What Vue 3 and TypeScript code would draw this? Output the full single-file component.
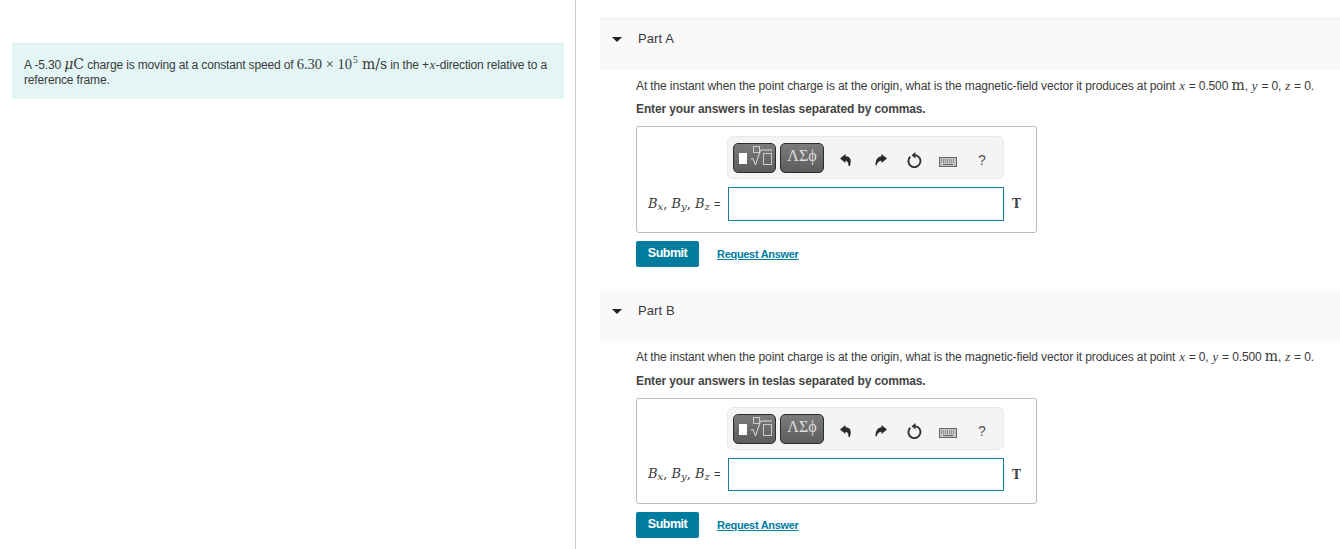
<script setup lang="ts">
interface Part {
  title: string
  point: 'x' | 'y'
}

const parts: Part[] = [
  { title: 'Part A', point: 'x' },
  { title: 'Part B', point: 'y' }
]
</script>

<template>
  <div class="page">
    <aside class="left">
      <div class="intro">
        A -5.30 <span class="u"><i>μ</i>C</span> charge is moving at a constant speed of
        <span class="n">6.30 × 10<sup>5</sup></span> <span class="u">m/s</span> in the +<i class="v">x</i>-direction relative to a
        reference frame.
      </div>
    </aside>

    <main class="right">
      <section v-for="part in parts" :key="part.title" class="part">
        <header class="part-head">
          <span class="caret"></span>
          <span class="part-title">{{ part.title }}</span>
        </header>

        <div class="part-body">
          <p class="question">
            At the instant when the point charge is at the origin, what is the magnetic-field vector it produces at point
            <template v-if="part.point === 'x'">
              <i class="v">x</i> = 0.500 <span class="u">m</span>, <i class="v">y</i> = 0, <i class="v">z</i> = 0.
            </template>
            <template v-else>
              <i class="v">x</i> = 0, <i class="v">y</i> = 0.500 <span class="u">m</span>, <i class="v">z</i> = 0.
            </template>
          </p>
          <p class="hint">Enter your answers in teslas separated by commas.</p>

          <div class="answer">
            <div class="toolbar">
              <button class="tpl" type="button">
                <svg width="41" height="28" viewBox="0 0 41 28">
                  <rect x="5" y="9" width="8" height="11" fill="#fff" />
                  <rect x="19.500" y="2.500" width="6" height="6" fill="none" stroke="#ccc" />
                  <path d="M17 15l2-.5 2.500 6.500 5-15H38" fill="none" stroke="#ddd" />
                  <rect x="29.500" y="9.500" width="8" height="11" fill="none" stroke="#ccc" />
                </svg>
              </button>
              <button class="tpl sym" type="button">ΛΣϕ</button>
              <div class="tools">
                <svg class="ico undo" viewBox="0 0 12 12" width="12" height="12">
                  <path d="M5.500 0L0 4.500 5.500 9V6.800c2 0 3 2 3 5.200h1.300c2.200-5.500.7-9.700-4.300-9.700z" fill="#2a2a2a" />
                </svg>
                <svg class="ico redo" viewBox="0 0 12 12" width="12" height="12">
                  <path d="M6.500 0L12 4.500 6.500 9V6.800c-2.500 0-4 1.500-5 4.700H.5C.3 6 3 2.300 6.500 2.300z" fill="#2a2a2a" />
                </svg>
                <svg class="ico reset" viewBox="0 0 16 16" width="16" height="16">
                  <path d="M4.300 4.700a6 6 0 1 0 4.700-1.600" fill="none" stroke="#333" stroke-width="1.900" />
                  <path d="M9.500 0v6.500L5.500 3.200z" fill="#333" />
                </svg>
                <svg class="kbd" viewBox="0 0 18 10" width="18" height="10">
                  <rect x=".5" y=".5" width="17" height="9" fill="#c4c4c4" stroke="#666" />
                  <path d="M2 3h14M2 5h14" stroke="#666" stroke-dasharray="1 1" />
                  <path d="M4 7.500h10" stroke="#666" />
                </svg>
                <span class="help">?</span>
              </div>
            </div>

            <div class="row">
              <label class="lbl">
                <i>B<sub>x</sub></i>, <i>B<sub>y</sub></i>, <i>B<sub>z</sub></i> <span class="eq">=</span>
              </label>
              <input class="field" type="text" />
              <span class="unit">T</span>
            </div>
          </div>

          <div class="actions">
            <button class="submit" type="button">Submit</button>
            <a class="req" href="#">Request Answer</a>
          </div>
        </div>
      </section>
    </main>
  </div>
</template>

<style>
html, body { margin: 0; background: #fff; }
</style>

<style scoped>
.page { display: flex; width: 1340px; height: 549px; overflow: hidden; font-family: "Liberation Sans", Arial, sans-serif; color: #3a3a3a; font-size: 12px; letter-spacing: -0.12px; }
.left { flex: none; width: 552px; border-right: 1px solid #c6d0dc; padding: 43px 11px 0 12px; }
.intro { background: #e4f5f6; border-top: 1px solid #e0ecee; height: 56px; box-sizing: border-box; padding: 14px 12px 0; line-height: 15px; letter-spacing: -0.15px; }
.n { font-family: "Liberation Serif", serif; font-size: 14.5px; line-height: 0; letter-spacing: 0; }
.n sup { font-size: 9.5px; line-height: 0; margin: 0 1px 0 1px; }
.u { font-family: "DejaVu Serif", serif; font-size: 14px; line-height: 0; letter-spacing: 0; }
.v { font-family: "Liberation Serif", serif; font-style: italic; font-size: 13px; line-height: 0; margin: 0 .7px; }

.right { flex: 1; padding: 18px 0 0 24px; min-width: 0; }
.part-head { height: 52px; background: #f9f9f9; display: flex; align-items: flex-start; padding-top: 12px; box-sizing: border-box; }
.part:first-child .part-head { border-top: 1px solid #eee; }
.part + .part { margin-top: 24px; }
.part + .part .part-head { height: 50px; }
.caret { width: 0; height: 0; margin: 6px 0 0 12px; border-left: 5px solid transparent; border-right: 5px solid transparent; border-top: 5px solid #222; }
.part-title { margin-left: 16px; font-size: 13px; line-height: 16px; letter-spacing: .1px; }
.part-body { padding-left: 36px; }
.question { margin: 0; padding-top: 9px; line-height: 15px; white-space: nowrap; }
.hint { margin: 8px 0 0; font-weight: 700; line-height: 15px; color: #444; }
.part + .part .hint { margin-top: 9px; }

.answer { margin-top: 9px; width: 401px; height: 107px; box-sizing: border-box; border: 1px solid #bbb; border-radius: 3px; padding-top: 9px; }
.part + .part .answer { height: 106px; padding-top: 8px; }
.toolbar { margin-left: 90px; width: 277px; height: 43px; box-sizing: border-box; background: #f4f4f4; border: 1px solid #e8e8e8; border-radius: 6px; display: flex; align-items: flex-start; padding: 6px 0 0 5px; gap: 4px; }
.tpl { width: 43px; height: 30px; padding: 0; border: 1px solid #2c2c2c; border-radius: 5px; background: linear-gradient(#7c7c7c, #5c5c5c); display: flex; align-items: center; justify-content: center; box-sizing: border-box; }
.sym { width: 44px; color: #ddd; font-family: "Liberation Serif", serif; font-size: 16px; padding-bottom: 5px; }
.tools { display: flex; align-items: center; height: 34px; margin-left: 12px; }
.ico { flex: none; }
.redo { margin-left: 23px; }
.reset { margin-left: 19px; margin-top: -1px; }
.kbd { margin-left: 17px; margin-top: 3px; }
.help { margin-left: 21px; font-size: 14px; color: #555; }

.row { display: flex; align-items: center; margin-top: 8px; }
.lbl { width: 91px; box-sizing: border-box; padding: 0 0 2px 11px; font-family: "DejaVu Serif", serif; font-size: 13px; white-space: nowrap; letter-spacing: 0; }
.lbl sub { font-size: 10px; line-height: 0; vertical-align: -2px; }
.eq { font-family: "Liberation Sans", sans-serif; font-size: 11px; }
.field { width: 276px; height: 34px; box-sizing: border-box; border: 1px solid #1a7f9e; background: #fff; padding: 0; outline: none; }
.part + .part .field { height: 33px; }
.unit { margin-left: 8px; font-family: "DejaVu Serif", serif; font-weight: 700; font-size: 12px; color: #444; letter-spacing: 0; }

.actions { display: flex; align-items: center; margin-top: 8px; }
.submit { width: 63px; height: 26px; padding: 0 0 2px; border: none; border-radius: 2px; background: #007c9f; color: #fff; font: 700 12.5px "Liberation Sans", sans-serif; letter-spacing: -0.5px; }
.req { margin-left: 18px; color: #007c9f; font-weight: 700; font-size: 11px; letter-spacing: -0.3px; }
</style>
